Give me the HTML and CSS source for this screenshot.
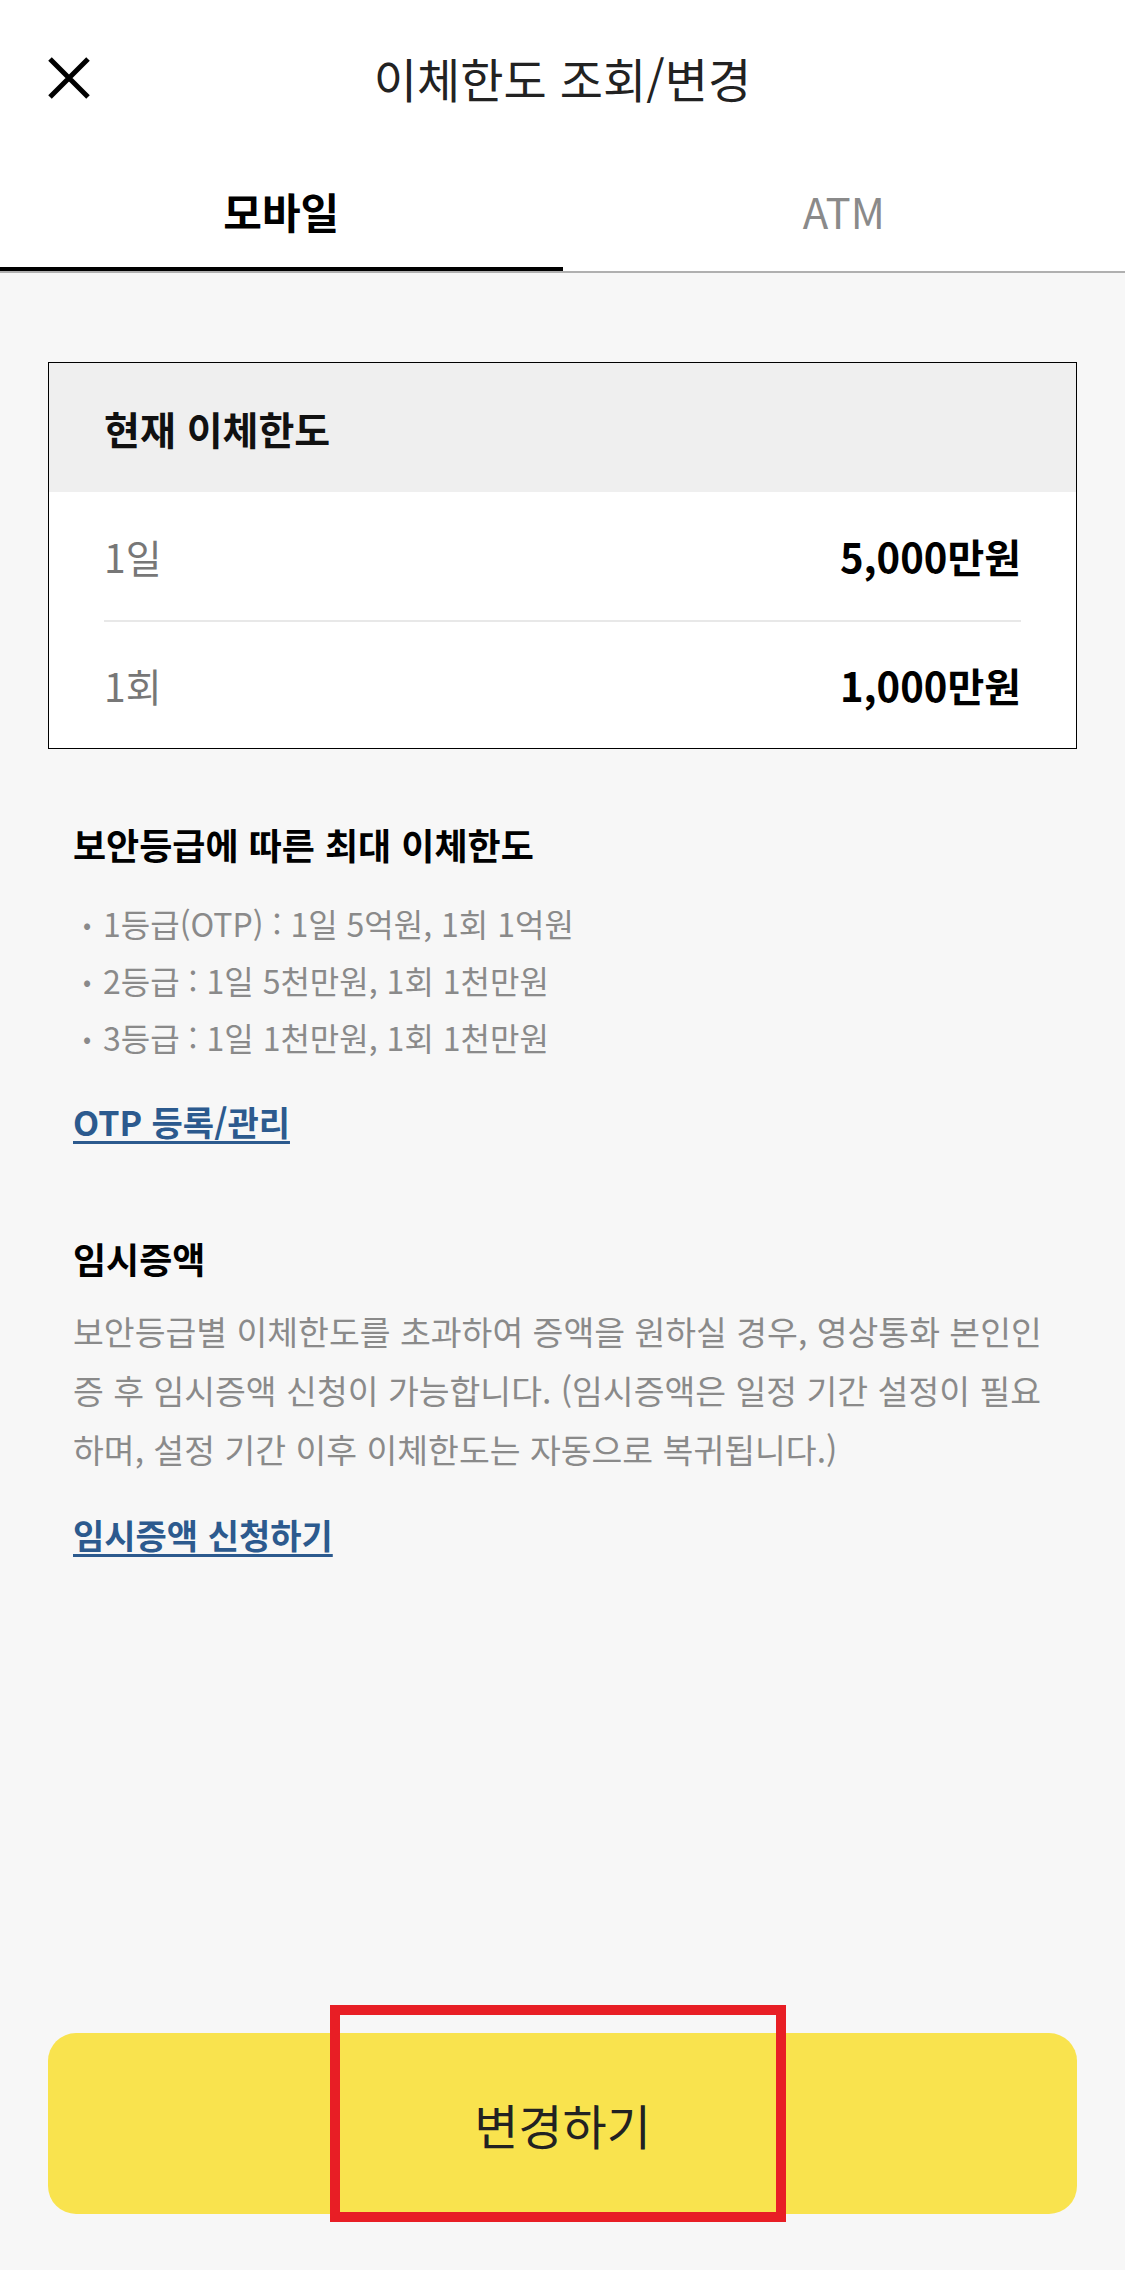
FILE: index.html
```html
<!DOCTYPE html>
<html lang="ko">
<head>
  <meta charset="UTF-8">
  <title>이체한도 조회/변경</title>
  <meta name="viewport" content="width=device-width, initial-scale=1.0">
  <link rel="stylesheet" href="styles.css">
</head>
<body>

  <div class="page">
    <header class="topbar">
      <button class="btn-close" aria-label="닫기">
        <svg width="44" height="44" viewBox="0 0 44 44">
          <path d="M3 3 L41 41 M41 3 L3 41" stroke="#000" stroke-width="5" fill="none"/>
        </svg>
      </button>
      <h1>이체한도 조회/변경</h1>
    </header>

    <nav class="tabs">
      <div class="tab active">모바일</div>
      <div class="tab">ATM</div>
    </nav>

    <main class="content">
      <div class="limit-card">
        <div class="limit-head">현재 이체한도</div>
        <div class="limit-row">
          <span class="label">1일</span>
          <span class="value">5,000만원</span>
        </div>
        <div class="limit-row">
          <span class="label">1회</span>
          <span class="value">1,000만원</span>
        </div>
      </div>

      <section class="info first">
        <h2>보안등급에 따른 최대 이체한도</h2>
        <ul class="grade-list">
          <li>1등급(OTP) : 1일 5억원, 1회 1억원</li>
          <li>2등급 : 1일 5천만원, 1회 1천만원</li>
          <li>3등급 : 1일 1천만원, 1회 1천만원</li>
        </ul>
        <a href="#" class="link">OTP 등록/관리</a>
      </section>

      <section class="info second">
        <h2>임시증액</h2>
        <p class="desc">보안등급별 이체한도를 초과하여 증액을 원하실 경우, 영상통화 본인인증 후 임시증액 신청이 가능합니다. (임시증액은 일정 기간 설정이 필요하며, 설정 기간 이후 이체한도는 자동으로 복귀됩니다.)</p>
        <a href="#" class="link">임시증액 신청하기</a>
      </section>

      <div class="bottom">
        <button class="btn-change">변경하기</button>
        <div class="highlight"></div>
      </div>
    </main>
  </div>

</body>
</html>
```

FILE: styles.css
```css
* { box-sizing: border-box; }

body {
  margin: 0;
  background-color: #f7f7f7;
  color: #222;
  font-family: "Noto Sans CJK KR", "Noto Sans", sans-serif;
}

.page {
  min-height: 100vh;
  display: flex;
  flex-direction: column;
}

.topbar {
  height: 154px;
  background-color: white;
  display: flex;
  align-items: center;
  justify-content: center;
  position: relative;
}

.topbar h1 {
  margin: 0;
  font-size: 47px;
  font-weight: normal;
  color: #222;
  line-height: 1;
}

.btn-close {
  position: absolute;
  left: 47px;
  top: 56px;
  padding: 0;
  border: none;
  background: none;
  width: 44px;
  height: 44px;
}

.btn-close svg { display: block; }

.tabs {
  display: flex;
  background-color: white;
  border-bottom: 2px solid #b0b0b0;
}

.tab {
  flex: 1;
  height: 117px;
  display: flex;
  align-items: center;
  justify-content: center;
  font-size: 42px;
  color: #8a8a8a;
  border-bottom: 4px solid transparent;
}

.tab.active {
  color: #000;
  font-weight: bold;
  border-bottom-color: #000;
}

.content {
  flex: 1;
  display: flex;
  flex-direction: column;
  padding: 89px 48px 56px;
}

.limit-card {
  border: 1px solid #000;
  background-color: white;
}

.limit-head {
  height: 129px;
  background-color: #efefef;
  padding-left: 55px;
  display: flex;
  align-items: center;
  font-size: 39px;
  font-weight: bold;
  color: #111;
}

.limit-row {
  height: 128px;
  margin: 0 55px;
  display: flex;
  align-items: center;
  justify-content: space-between;
  font-size: 39px;
}

.limit-row + .limit-row {
  border-top: 2px solid #e8e8e8;
}

.limit-row .label {
  color: #777;
}

.limit-row .value {
  font-size: 40px;
  font-weight: bold;
  color: #000;
}

.info {
  padding: 0 25px;
}

.info.first { margin-top: 71px; }
.info.second { margin-top: 88px; }

.info h2 {
  margin: 0;
  font-size: 36px;
  line-height: 48px;
  font-weight: bold;
  color: #000;
}

.grade-list {
  list-style: none;
  margin: 27px 0 32px;
  padding: 0;
}

.grade-list li {
  font-size: 32px;
  line-height: 57px;
  color: #8a8a8a;
  padding-left: 30px;
  position: relative;
}

.grade-list li::before {
  content: "•";
  position: absolute;
  left: 10px;
  font-size: 24px;
}

.desc {
  margin: 19px 0 33px;
  font-size: 33.5px;
  line-height: 59px;
  color: #8a8a8a;
}

.link {
  display: inline-block;
  font-size: 34px;
  line-height: 48px;
  font-weight: bold;
  color: #2c5a8e;
  text-decoration: underline;
  text-decoration-thickness: 3px;
  text-underline-offset: 5px;
}

.bottom {
  margin-top: auto;
  position: relative;
}

.btn-change {
  width: 100%;
  height: 181px;
  border: none;
  border-radius: 28px;
  background-color: #f9e34e;
  color: #222;
  font-family: inherit;
  font-size: 48px;
}

.highlight {
  position: absolute;
  left: 282px;
  top: -28px;
  width: 456px;
  height: 217px;
  border: 10px solid #e81e25;
}
```
